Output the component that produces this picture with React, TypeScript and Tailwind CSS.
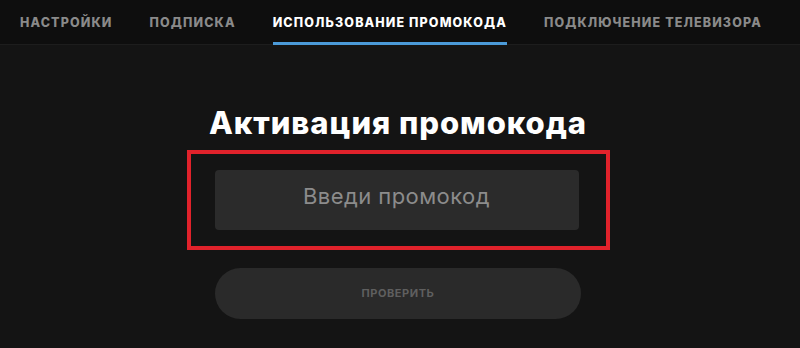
import React, { useState } from 'react';

const tabs = ['НАСТРОЙКИ', 'ПОДПИСКА', 'ИСПОЛЬЗОВАНИЕ ПРОМОКОДА', 'ПОДКЛЮЧЕНИЕ ТЕЛЕВИЗОРА'];

const App: React.FC = () => {
  const [active, setActive] = useState(2);
  const [code, setCode] = useState('');

  return (
    <div
      className="w-[800px] h-[348px] bg-[#141414] overflow-hidden"
      style={{ fontFamily: 'Inter, "Open Sans", "Liberation Sans", sans-serif' }}
    >
      <div className="h-[45px] bg-[#0e0e0e] border-b border-[#1d1d1d] flex items-stretch pl-[20px] gap-[37px]">
        {tabs.map((t, i) => (
          <button
            key={t}
            onClick={() => setActive(i)}
            className={`relative pt-[3px] text-[12.5px] font-extrabold tracking-[0.09em] ${
              active === i ? 'text-white' : 'text-[#8a8a8a]'
            }`}
          >
            {t}
            {active === i && (
              <span className="absolute left-0 right-0 bottom-[-1px] h-[3px] bg-[#4b9ad8]" />
            )}
          </button>
        ))}
      </div>

      <div className="flex flex-col items-center pt-[59px] pr-[4px]">
        <h1 className="text-[31px] leading-[38px] font-extrabold tracking-[0.03em] text-white">Активация промокода</h1>
        <div className="mt-[8px] w-[423px] border-[4px] border-[#e1222b] pt-[16px] pb-[16px] pl-[24px] pr-[27px]">
          <input
            value={code}
            onChange={e => setCode(e.target.value)}
            placeholder="Введи промокод"
            className="w-full h-[60px] pb-[8px] rounded-[4px] bg-[#2b2b2b] text-center text-[22px] tracking-[0.02em] text-[#bbb] placeholder:text-[#8c8c8c] outline-none"
          />
        </div>
        <button className="mt-[18px] w-[366px] h-[51px] rounded-full bg-[#2a2a2a] text-[11px] font-bold tracking-[0.05em] text-[#5f5f5f]">
          ПРОВЕРИТЬ
        </button>
      </div>
    </div>
  );
};

export default App;
